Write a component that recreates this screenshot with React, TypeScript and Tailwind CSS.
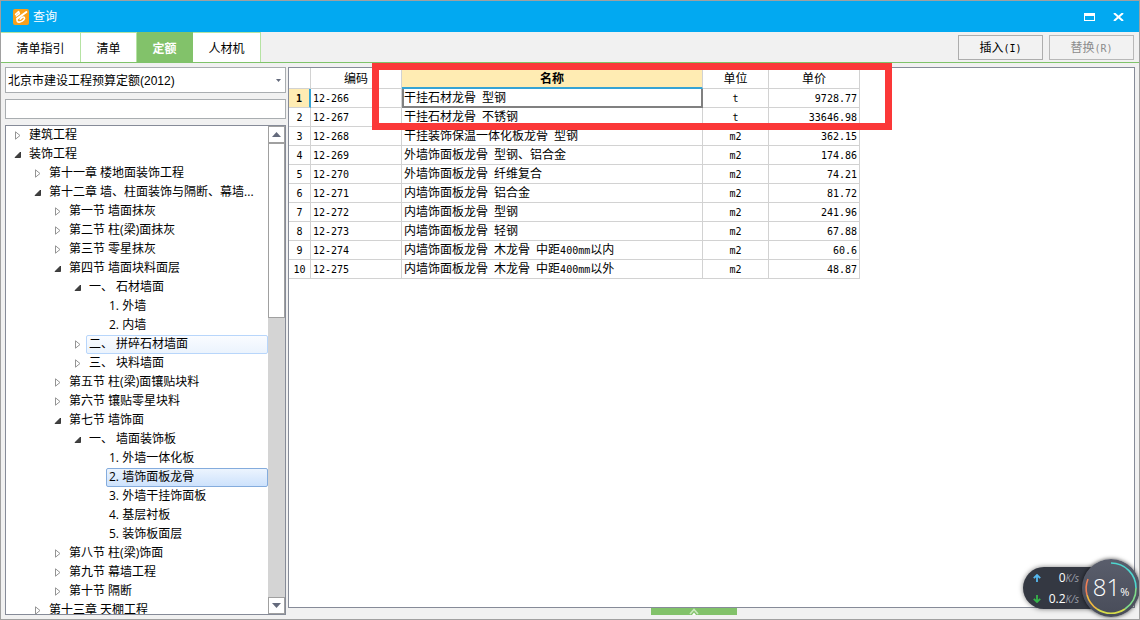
import { useState } from "react";
import { clsx } from "clsx";

interface TreeNode {
  label: string;
  level: number;
  open?: boolean;
  leaf?: boolean;
}

interface QuotaRow {
  code: string;
  name: string;
  unit: string;
  price: string;
}

const tabs = [
  { label: "清单指引", width: "w-20" },
  { label: "清单", width: "w-14" },
  { label: "定额", width: "w-14" },
  { label: "人材机", width: "w-[68px]" },
];

const nodes: TreeNode[] = [
  { label: "建筑工程", level: 0 },
  { label: "装饰工程", level: 0, open: true },
  { label: "第十一章 楼地面装饰工程", level: 1 },
  { label: "第十二章 墙、柱面装饰与隔断、幕墙...", level: 1, open: true },
  { label: "第一节 墙面抹灰", level: 2 },
  { label: "第二节 柱(梁)面抹灰", level: 2 },
  { label: "第三节 零星抹灰", level: 2 },
  { label: "第四节 墙面块料面层", level: 2, open: true },
  { label: "一、 石材墙面", level: 3, open: true },
  { label: "1. 外墙", level: 4, leaf: true },
  { label: "2. 内墙", level: 4, leaf: true },
  { label: "二、 拼碎石材墙面", level: 3 },
  { label: "三、 块料墙面", level: 3 },
  { label: "第五节 柱(梁)面镶贴块料", level: 2 },
  { label: "第六节 镶贴零星块料", level: 2 },
  { label: "第七节 墙饰面", level: 2, open: true },
  { label: "一、 墙面装饰板", level: 3, open: true },
  { label: "1. 外墙一体化板", level: 4, leaf: true },
  { label: "2. 墙饰面板龙骨", level: 4, leaf: true },
  { label: "3. 外墙干挂饰面板", level: 4, leaf: true },
  { label: "4. 基层衬板", level: 4, leaf: true },
  { label: "5. 装饰板面层", level: 4, leaf: true },
  { label: "第八节 柱(梁)饰面", level: 2 },
  { label: "第九节 幕墙工程", level: 2 },
  { label: "第十节 隔断", level: 2 },
  { label: "第十三章 天棚工程", level: 1 },
];

const rows: QuotaRow[] = [
  { code: "12-266", name: "干挂石材龙骨 型钢", unit: "t", price: "9728.77" },
  { code: "12-267", name: "干挂石材龙骨 不锈钢", unit: "t", price: "33646.98" },
  { code: "12-268", name: "干挂装饰保温一体化板龙骨 型钢", unit: "m2", price: "362.15" },
  { code: "12-269", name: "外墙饰面板龙骨 型钢、铝合金", unit: "m2", price: "174.86" },
  { code: "12-270", name: "外墙饰面板龙骨 纤维复合", unit: "m2", price: "74.21" },
  { code: "12-271", name: "内墙饰面板龙骨 铝合金", unit: "m2", price: "81.72" },
  { code: "12-272", name: "内墙饰面板龙骨 型钢", unit: "m2", price: "241.96" },
  { code: "12-273", name: "内墙饰面板龙骨 轻钢", unit: "m2", price: "67.88" },
  { code: "12-274", name: "内墙饰面板龙骨 木龙骨 中距400mm以内", unit: "m2", price: "60.6" },
  { code: "12-275", name: "内墙饰面板龙骨 木龙骨 中距400mm以外", unit: "m2", price: "48.87" },
];

const levelPadding = ["pl-0", "pl-5", "pl-10", "pl-[60px]", "pl-20"];

// Latin runs take half the width of a Chinese character
function GridText({ text }: { text: string }) {
  return (
    <>
      {text.split(/([\x20-\x7e]+)/).map((run, i) =>
        i % 2 === 1 ? (
          <span key={i} className="font-['DejaVu_Sans_Mono',monospace] text-[10px] leading-none whitespace-pre">
            {run}
          </span>
        ) : (
          run
        ),
      )}
    </>
  );
}

function Logo() {
  return (
    <svg viewBox="0 0 16 16" className="size-4" aria-hidden="true">
      <rect width="16" height="16" rx="2" fill="#f9a01b" />
      <g fill="none" stroke="#fff" strokeLinecap="round" strokeLinejoin="round">
        <path d="M2.600 5.400 5.600 2.600 6.400 4.600 3.400 7" strokeWidth="1.500" />
        <path d="M13.400 3 4.200 9.600" strokeWidth="2" />
        <path d="M4.200 9.600C3.200 12.400 4.600 13.600 7 13 10.400 12.200 12.400 9.600 11.200 8.200 10.400 7.400 8.600 8.600 7.200 10.200" strokeWidth="1.600" />
      </g>
    </svg>
  );
}

function TitleBar() {
  return (
    <header className="flex h-[31px] shrink-0 items-center bg-[#02a9f1] pl-3 pr-[15px] text-white">
      <Logo />
      <h1 className="ml-1 flex-1 pt-px">查询</h1>
      <button aria-label="最大化" className="mr-[18px]">
        <svg viewBox="0 0 11 8" className="h-2 w-[11px]" fill="#fff">
          <path d="M0 0h11v8H0zM1 3v4h9V3z" fillRule="evenodd" />
        </svg>
      </button>
      <button aria-label="关闭">
        <svg viewBox="0 0 11 8" className="h-2 w-[11px]" stroke="#fff" strokeWidth="2">
          <path d="M1 0 10 8M10 0 1 8" />
        </svg>
      </button>
    </header>
  );
}

function Toolbar() {
  const [active, setActive] = useState("定额");

  return (
    <div className="flex h-[31px] shrink-0 items-center border-b border-[#7fc36a]">
      <div role="tablist" className="flex flex-1 self-stretch">
        {tabs.map((tab) => (
          <button
            key={tab.label}
            role="tab"
            aria-selected={active === tab.label}
            onClick={() => setActive(tab.label)}
            className={clsx(
              "border-t border-r pt-[3px]",
              tab.width,
              active === tab.label
                ? "border-[#82c26a] bg-[#82c26a] font-bold text-white"
                : "border-[#b5e3a3] bg-white",
            )}
          >
            {tab.label}
          </button>
        ))}
      </div>
      <div className="flex gap-[6px] pr-[5px]">
        <button className="h-[25px] w-[85px] border border-[#adadad] bg-[#f2f2f2] pt-[2px]">
          <GridText text="插入(I)" />
        </button>
        <button disabled className="h-[25px] w-[85px] border border-[#b8b8b8] bg-[#f2f2f2] pt-[2px] text-[#8c8c8c]">
          <GridText text="替换(R)" />
        </button>
      </div>
    </div>
  );
}

function Expander({ open }: { open?: boolean }) {
  return (
    <svg viewBox="0 0 8 9" className="h-[9px] w-2">
      {open ? (
        <path d="M6.500 2v5.500H1z" fill="#404040" stroke="#222" strokeWidth="0.800" />
      ) : (
        <path d="M1.500 .8v7.400L6 4.500z" fill="#fff" stroke="#949494" />
      )}
    </svg>
  );
}

function ScrollBar() {
  return (
    <div className="flex w-[17px] shrink-0 flex-col bg-[#d4d4d4]">
      <button aria-label="向上滚动" className="flex h-[17px] items-center justify-center border border-[#a0a0a0] bg-white">
        <svg viewBox="0 0 9 5" className="h-[5px] w-[9px]" fill="#646a7c">
          <path d="M0 5 4.500 0 9 5z" />
        </svg>
      </button>
      <div className="h-[175px] border border-[#a0a0a0] bg-white" />
      <button
        aria-label="向下滚动"
        className="mt-auto flex h-[17px] items-center justify-center border border-[#a0a0a0] bg-white"
      >
        <svg viewBox="0 0 9 5" className="h-[5px] w-[9px]" fill="#646a7c">
          <path d="M0 0 4.500 5 9 0z" />
        </svg>
      </button>
    </div>
  );
}

function Tree() {
  const [selected, setSelected] = useState(18);

  return (
    <div className="flex min-h-0 flex-1 border border-[#868b98] bg-white font-['Open_Sans','Noto_Sans_CJK_SC',sans-serif]">
      <ul role="tree" aria-label="定额章节" className="min-w-0 flex-1 overflow-hidden">
        {nodes.map((node, i) => (
          <li
            key={i}
            role="treeitem"
            aria-selected={selected === i}
            onClick={() => setSelected(i)}
            className={clsx("flex h-[19px] items-stretch", levelPadding[node.level])}
          >
            <span className="flex w-5 shrink-0 items-center justify-center pl-[3px]">
              {!node.leaf && <Expander open={node.open} />}
            </span>
            <span
              className={clsx(
                "flex-1 truncate rounded-[2px] border px-[2px] leading-[15px]",
                selected === i && "border-[#84acdd] bg-linear-to-b from-[#ecf4fe] to-[#cde2fc]",
                selected !== i && i === 11 && "border-[#b8d6fb] bg-linear-to-b from-[#fafcff] to-[#ebf3fd]",
                selected !== i && i !== 11 && "border-transparent",
              )}
            >
              {node.label}
            </span>
          </li>
        ))}
      </ul>
      <ScrollBar />
    </div>
  );
}

function Sidebar() {
  return (
    <aside className="flex w-[281px] shrink-0 flex-col">
      <div className="relative">
        <select
          aria-label="定额库"
          className="block h-[26px] w-full appearance-none border border-[#a9adb0] bg-white px-[2px] pt-px outline-none"
        >
          <option>北京市建设工程预算定额(2012)</option>
        </select>
        <svg viewBox="0 0 5 3" className="pointer-events-none absolute top-3 right-[5px] h-[3px] w-[5px]" fill="#646a7c">
          <path d="M0 0h5L2.500 3z" />
        </svg>
      </div>
      <input
        aria-label="搜索"
        className="my-[6px] h-5 w-full shrink-0 border border-[#a9adb0] bg-white px-[3px] outline-none"
      />
      <Tree />
    </aside>
  );
}

function QuotaTable() {
  const [current, setCurrent] = useState(0);

  return (
    <table className="w-[571px] table-fixed border-separate border-spacing-0">
      <colgroup>
        <col className="w-[22px]" />
        <col className="w-[91px]" />
        <col className="w-[301px]" />
        <col className="w-[66px]" />
        <col className="w-[91px]" />
      </colgroup>
      <thead>
        <tr className="h-[21px] *:border-r *:border-b *:border-[#d2d2d2] *:p-0 *:pt-[2px] *:font-normal">
          <td />
          <th>编码</th>
          <th className="border-b-2! border-b-[#35a3d4]! bg-[#ffecb3] font-bold!">名称</th>
          <th>单位</th>
          <th>单价</th>
        </tr>
      </thead>
      <tbody>
        {rows.map((row, i) => (
          <tr
            key={row.code}
            onClick={() => setCurrent(i)}
            className="h-[19px] leading-4 *:border-r *:border-b *:border-[#d2d2d2] *:py-0 *:whitespace-nowrap"
          >
            <th
              className={clsx(
                "p-0 text-center",
                i === current ? "border-r-2! border-r-[#35a3d4]! bg-[#ffecb3] font-bold" : "font-normal",
              )}
            >
              <GridText text={String(i + 1)} />
            </th>
            <td className="px-[2px]">
              <GridText text={row.code} />
            </td>
            <td
              className={clsx(
                "px-[2px]",
                i === current && "border-r-2! border-b-2! border-l-2 border-[#808080]! px-0!",
              )}
            >
              <GridText text={row.name} />
            </td>
            <td className="p-0 text-center">
              <GridText text={row.unit} />
            </td>
            <td className="px-[2px] text-right">
              <GridText text={row.price} />
            </td>
          </tr>
        ))}
      </tbody>
    </table>
  );
}

function SpeedRow({ up, value }: { up?: boolean; value: string }) {
  return (
    <div className="flex h-[21px] items-center pl-[10px]">
      <svg viewBox="0 0 8 8" className="size-2" fill="none" stroke={up ? "#56b9f0" : "#35b54a"} strokeWidth="1.800">
        <path d={up ? "M4 8V1M.8 4.2 4 1l3.200 3.200" : "M4 0v7M.8 3.800 4 7l3.200-3.200"} />
      </svg>
      <span className="flex-1 text-right text-[12px] text-white">{value}</span>
      <span className="text-[10px] text-[#9a9ea8] italic">K/s</span>
    </div>
  );
}

function SpeedWidget() {
  return (
    <div className="absolute -right-px bottom-[2px] flex items-center font-['Open_Sans',sans-serif]">
      <div className="-mr-[25px] h-[42px] w-[84px] rounded-l-full bg-[#343842] pr-[28px] shadow-[0_0_5px_rgba(0,0,0,0.5)]">
        <SpeedRow up value="0" />
        <SpeedRow value="0.2" />
      </div>
      <div className="relative flex size-[58px] items-baseline justify-center rounded-full bg-linear-to-b from-[#5a5e6c] to-[#484c59] leading-[56px] text-white shadow-[0_0_4px_rgba(0,0,0,0.7)]">
        <svg viewBox="0 0 58 58" className="absolute inset-0" fill="none" strokeWidth="1.600">
          <path d="M29 4A25 25 0 0 1 54 29" stroke="#4ed6cf" />
          <path d="M54 29A25 25 0 0 1 43 50" stroke="#7fdc8a" />
          <path d="M43 50A25 25 0 0 1 15 50" stroke="#d6dc4a" />
          <path d="M15 50A25 25 0 0 1 5 36" stroke="#f0b840" />
          <path d="M5 36A25 25 0 0 1 6 20" stroke="#f07f55" />
        </svg>
        <span className="text-[24px] font-light">81</span>
        <span className="text-[11px]">%</span>
      </div>
    </div>
  );
}

export default function App() {
  return (
    <div className="relative flex h-screen flex-col overflow-hidden border border-[#a0a0a0] bg-[#f1f1f1] font-['Liberation_Sans','Noto_Sans_CJK_SC',sans-serif] text-[12px] leading-4 text-black">
      <TitleBar />
      <Toolbar />
      <main className="flex min-h-0 flex-1 gap-[2px] px-1 pt-1">
        <div className="flex pb-1">
          <Sidebar />
        </div>
        <section className="flex min-w-0 flex-1 flex-col">
          <div className="relative min-h-0 flex-1 border border-[#868b98] bg-white">
            <QuotaTable />
            <div className="pointer-events-none absolute -top-[5px] left-[83px] h-[67px] w-[520px] border-[7px] border-[#fb3838]" />
          </div>
          <button
            aria-label="展开详情"
            className="mb-1 ml-[363px] flex h-[7px] w-[86px] shrink-0 items-center justify-center bg-[#82c26a]"
          >
            <svg viewBox="0 0 10 7" className="h-[7px] w-[10px]" fill="none">
              <path d="M1 6 5 1.500 9 6" stroke="#c9e8bd" strokeWidth="1.600" />
              <path d="M3 7 5 4.500 7 7z" fill="#fff" />
            </svg>
          </button>
        </section>
      </main>
      <SpeedWidget />
    </div>
  );
}
